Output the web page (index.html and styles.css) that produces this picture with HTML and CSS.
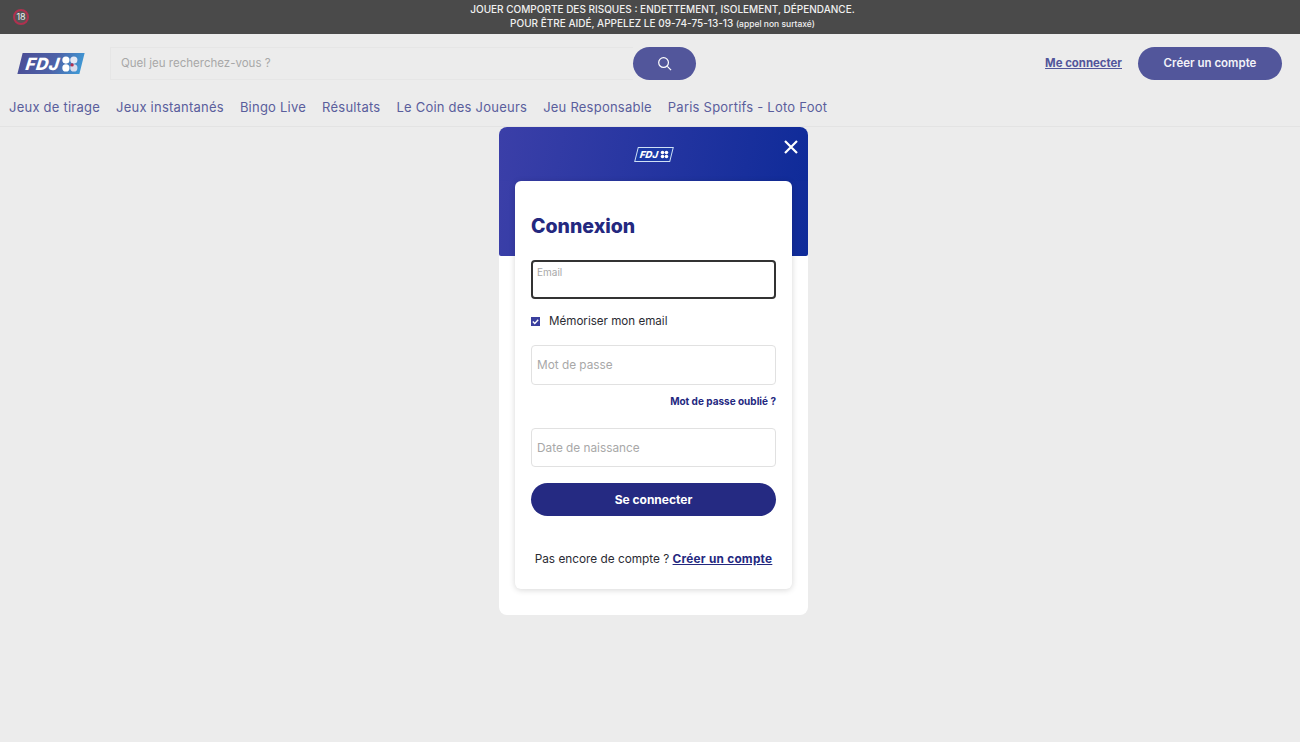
FILE: index.html
```html
<!DOCTYPE html>
<html lang="fr">
<head>
    <meta charset="UTF-8">
    <title>Connexion - FDJ</title>
    <link rel="stylesheet" href="styles.css">
</head>
<body>
    <!-- bandeau de prevention -->
    <div class="warning">
        <span class="age-badge">18</span>
        <p class="warning-text">
            JOUER COMPORTE DES RISQUES : ENDETTEMENT, ISOLEMENT, DÉPENDANCE.<br>
            POUR ÊTRE AIDÉ, APPELEZ LE 09-74-75-13-13 <small>(appel non surtaxé)</small>
        </p>
    </div>

    <header class="header">
        <div class="header-row">
            <a class="logo" href="#">
                <span class="logo-text">FDJ</span>
                <svg class="clover" viewBox="0 0 20 20">
                    <circle cx="5.6" cy="5.6" r="4" fill="#fff"/>
                    <circle cx="14.4" cy="5.6" r="4" fill="#e4e8f4"/>
                    <circle cx="5.6" cy="14.4" r="4" fill="#fff"/>
                    <circle cx="14.4" cy="14.4" r="4" fill="#d8dcec"/>
                    <circle cx="12.5" cy="11" r="1.8" fill="#b5304f"/>
                </svg>
            </a>
            <div class="search">
                <div class="search-field">Quel jeu recherchez-vous ?</div>
                <button class="search-button">
                    <svg viewBox="0 0 16 16" width="15" height="15" fill="none" stroke="#fff" stroke-width="1.3">
                        <circle cx="7" cy="7" r="5.2"/>
                        <path d="M11 11l4 4"/>
                    </svg>
                </button>
            </div>
            <a class="login-link" href="#">Me connecter</a>
            <a class="signup-button" href="#">Créer un compte</a>
        </div>
        <nav class="nav">
            <a href="#">Jeux de tirage</a>
            <a href="#">Jeux instantanés</a>
            <a href="#">Bingo Live</a>
            <a href="#">Résultats</a>
            <a href="#">Le Coin des Joueurs</a>
            <a href="#">Jeu Responsable</a>
            <a href="#">Paris Sportifs - Loto Foot</a>
        </nav>
    </header>

    <main class="modal">
        <div class="modal-top">
            <a class="logo logo-small" href="#">
                <span class="logo-text">FDJ</span>
                <svg class="clover" viewBox="0 0 20 20">
                    <circle cx="5.6" cy="5.6" r="4" fill="#fff"/>
                    <circle cx="14.4" cy="5.6" r="4" fill="#fff"/>
                    <circle cx="5.6" cy="14.4" r="4" fill="#fff"/>
                    <circle cx="14.4" cy="14.4" r="4" fill="#fff"/>
                </svg>
            </a>
            <svg class="close" viewBox="0 0 14 14" width="14" height="14" stroke="#fff" stroke-width="2.2">
                <path d="M1 1l12 12M13 1L1 13"/>
            </svg>
        </div>
        <div class="modal-curve"></div>
        <form class="card">
            <h1>Connexion</h1>
            <div class="field field-focus"><span class="field-label">Email</span></div>
            <label class="remember">
                <span class="checkbox">
                    <svg viewBox="0 0 10 10" width="9" height="9" fill="none" stroke="#fff" stroke-width="1.5">
                        <path d="M2 5l2.2 2.2L8 3"/>
                    </svg>
                </span>
                Mémoriser mon email
            </label>
            <div class="field field-password">Mot de passe</div>
            <a class="forgot" href="#">Mot de passe oublié ?</a>
            <div class="field field-date">Date de naissance</div>
            <button class="submit" type="button">Se connecter</button>
            <p class="signup-line">Pas encore de compte ? <a href="#">Créer un compte</a></p>
        </form>
    </main>
</body>
</html>
```

FILE: styles.css
```css
html, body {
    height: 100%;
    overflow: hidden;
}
body {
    margin: 0;
    background-color: #ececec;
    font-family: Inter, "Liberation Sans", sans-serif;
    color: #2b2b33;
}
a {
    text-decoration: none;
}

/* bandeau */
.warning {
    display: flex;
    align-items: center;
    height: 34px;
    background-color: #4a4a4a;
    color: #f0f0f0;
}
.age-badge {
    width: 12px;
    height: 12px;
    margin-left: 13px;
    margin-bottom: 1px;
    border: 2px solid #b0314f;
    border-radius: 50%;
    background-color: #555;
    color: #eee;
    font-size: 9px;
    line-height: 12px;
    text-align: center;
}
.warning-text {
    flex: 1;
    margin: 0;
    padding-right: 4px;
    font-size: 10px;
    line-height: 13.5px;
    font-weight: 500;
    text-align: center;
}
.warning-text small {
    font-size: 8.5px;
}

/* header */
.header {
    height: 92px;
    border-bottom: 1px solid #e3e3e3;
}
.header-row {
    display: flex;
    align-items: center;
    height: 33px;
    padding: 13px 18px 0;
}
.logo {
    display: flex;
    align-items: center;
    justify-content: space-between;
    box-sizing: border-box;
    width: 62px;
    height: 21px;
    padding: 0 3px 0 6px;
    margin-left: 2px;
    background: linear-gradient(100deg, #4b4f97 0%, #4d62a8 55%, #3f9ad6 100%);
    transform: skewX(-14deg);
}
.logo-text {
    color: #fff;
    font-size: 17px;
    font-weight: 800;
    font-style: italic;
    letter-spacing: 0.5px;
    transform: skewX(6deg);
}
.clover {
    flex: none;
    width: 18px;
    height: 18px;
    transform: skewX(14deg);
}
.search {
    display: flex;
    width: 586px;
    margin-left: 28px;
}
.search-field {
    flex: 1;
    height: 33px;
    box-sizing: border-box;
    padding-left: 10px;
    border: 1px solid #e6e6e6;
    border-right: none;
    color: #a8a8a8;
    font-size: 11.5px;
    line-height: 30px;
}
.search-button {
    display: flex;
    align-items: center;
    justify-content: center;
    width: 63px;
    height: 33px;
    border: none;
    border-radius: 17px;
    background-color: #52569b;
}
.login-link {
    margin-left: auto;
    margin-bottom: 2px;
    color: #52569b;
    font-size: 11.4px;
    font-weight: 700;
    text-decoration: underline;
}
.signup-button {
    width: 144px;
    height: 33px;
    margin-left: 16px;
    border-radius: 17px;
    background-color: #52569b;
    color: #f2f2f8;
    font-size: 11.5px;
    font-weight: 600;
    line-height: 32px;
    text-align: center;
}
.nav {
    display: flex;
    gap: 16px;
    padding: 18px 9px 0;
}
.nav a {
    color: #5a5e9c;
    font-size: 13px;
    letter-spacing: 0.23px;
    line-height: 18px;
}

/* connexion */
.modal {
    width: 309px;
    margin-left: 499px;
    padding-bottom: 26px;
    background-color: #fff;
    border-radius: 8px;
}
.modal-top {
    display: flex;
    align-items: center;
    justify-content: center;
    position: relative;
    height: 54px;
    background: linear-gradient(100deg, #3b3fa8 0%, #0f2b99 100%);
    border-radius: 8px 8px 0 0;
}
.modal-curve {
    height: 75px;
    background: linear-gradient(100deg, #3b3fa8 0%, #0f2b99 100%);
    border-radius: 0 0 2px 2px;
}
.logo-small {
    width: 36px;
    height: 15px;
    padding: 0 2px 0 3px;
    margin: 0;
    background: #1c3aa6;
    border: 1px solid #cfe0f5;
}
.logo-small .logo-text {
    font-size: 9.5px;
    letter-spacing: 0;
}
.logo-small .clover {
    width: 9px;
    height: 9px;
}
.close {
    position: absolute;
    top: 13px;
    right: 10px;
}
.card {
    box-sizing: border-box;
    height: 408px;
    margin: -75px 16px 0;
    padding: 34px 16px 0;
    position: relative;
    background-color: #fff;
    border-radius: 6px;
    box-shadow: 0 1px 6px rgba(0, 0, 0, 0.16);
}
.card h1 {
    margin: 0 0 23px;
    color: #24287f;
    font-size: 19.5px;
    font-weight: 800;
    line-height: 22px;
}
.field {
    box-sizing: border-box;
    height: 39px;
    padding-left: 5px;
    border: 1px solid #e1e1e1;
    border-radius: 4px;
    color: #a8a8a8;
    font-size: 11.8px;
    line-height: 38px;
}
.field-focus {
    height: 39px;
    padding-left: 4px;
    border: 2px solid #333;
}
.field-label {
    display: block;
    font-size: 10px;
    line-height: 20px;
}
.field-password {
    height: 40px;
}
.remember {
    display: flex;
    align-items: center;
    gap: 9px;
    height: 14px;
    margin: 15px 0 17px;
    color: #2b2b33;
    font-size: 11.6px;
}
.checkbox {
    display: flex;
    align-items: center;
    justify-content: center;
    width: 9px;
    height: 9px;
    background-color: #3a3f9e;
}
.forgot {
    display: block;
    height: 12px;
    margin: 10px 0 21px;
    color: #24287f;
    font-size: 10px;
    font-weight: 700;
    line-height: 12px;
    text-align: right;
}
.submit {
    display: block;
    width: 100%;
    height: 33px;
    margin-top: 16px;
    padding-bottom: 2px;
    border: none;
    border-radius: 17px;
    background-color: #252a82;
    color: #fff;
    font-family: inherit;
    font-size: 12px;
    font-weight: 700;
}
.signup-line {
    margin: 35px 0 0;
    font-size: 11.8px;
    line-height: 16px;
    text-align: center;
}
.signup-line a {
    color: #24287f;
    font-weight: 700;
    letter-spacing: 0.25px;
    text-decoration: underline;
}
```
